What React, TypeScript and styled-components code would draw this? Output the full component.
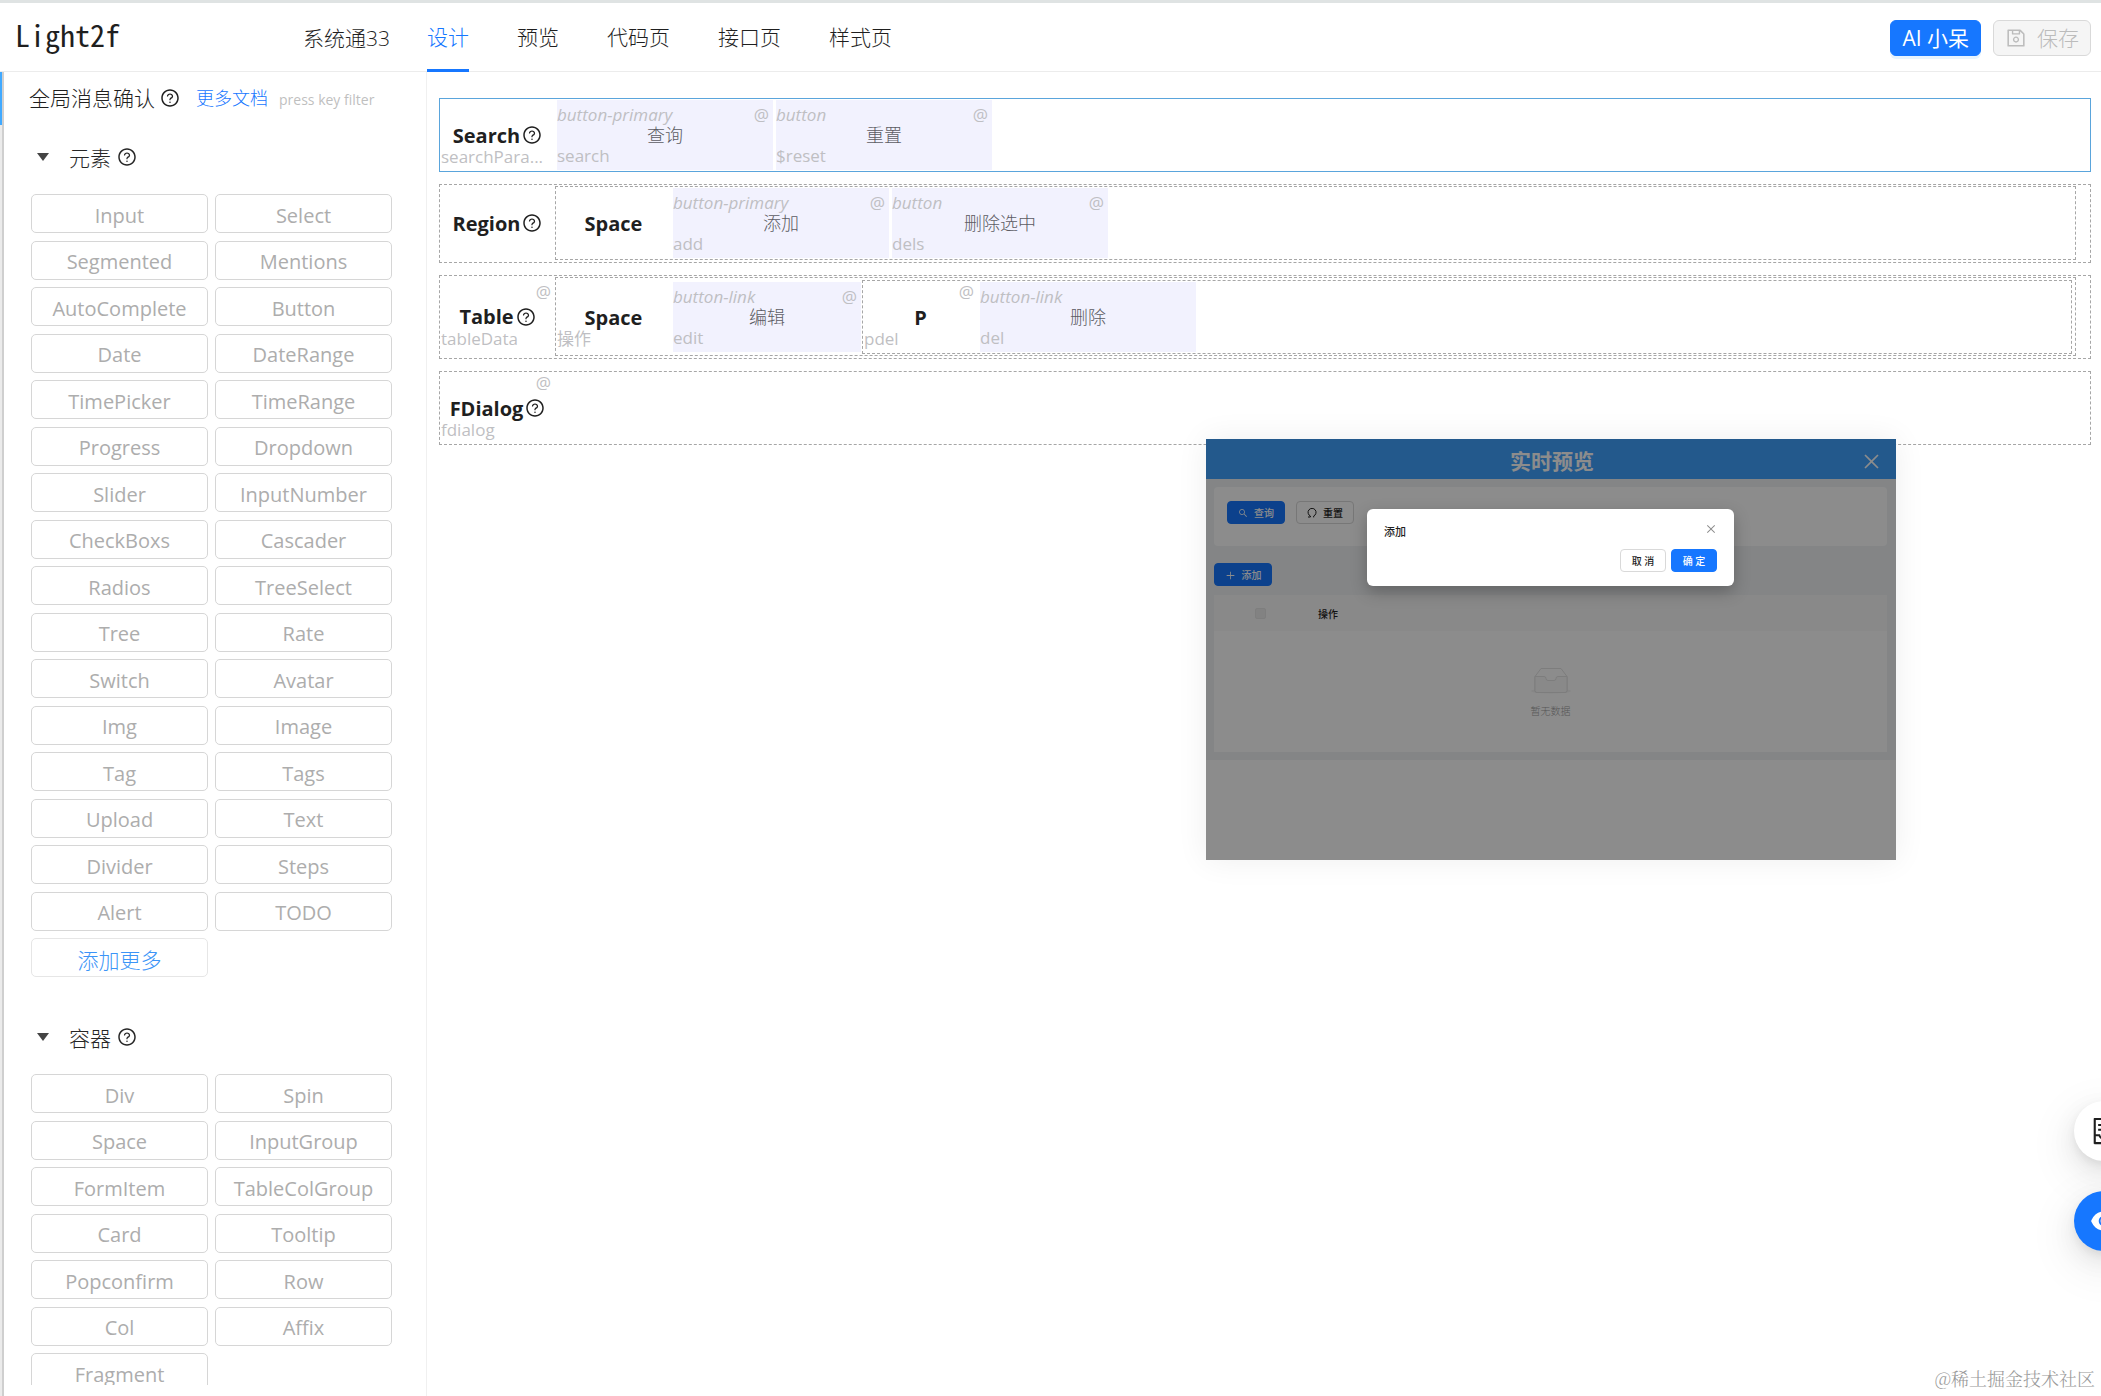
import React from "react";
import styled, { createGlobalStyle, css } from "styled-components";
import {
  AiFillEye,
  AiOutlineClose,
  AiOutlineContainer,
  AiOutlinePlus,
  AiOutlineQuestionCircle,
  AiOutlineSave,
  AiOutlineSearch,
} from "react-icons/ai";

const sans = '"Open Sans", "Noto Sans CJK SC", sans-serif';
const mono = '"Noto Sans Mono CJK SC", "DejaVu Sans Mono", monospace';
const serif = '"Noto Serif CJK SC", "Noto Sans CJK SC", serif';
const blue = "#1677ff";

const GlobalStyle = createGlobalStyle`
  *, *::before, *::after { box-sizing: border-box; }
  body { margin: 0; background: #fff; font-family: ${sans}; color: #1f1f1f; }
  button { font: inherit; margin: 0; padding: 0; cursor: pointer; }
  svg { display: block; flex: none; }
`;

const Shell = styled.div`
  position: relative;
  height: 100vh;
  display: flex;
  flex-direction: column;
  overflow: hidden;
`;

/* ---------- header ---------- */

const Header = styled.header`
  flex: none;
  display: flex;
  height: 72px;
  padding-right: 10px;
  border-top: 3px solid #dfe3e3;
  border-bottom: 1px solid #ececec;
`;

const Brand = styled.div`
  flex: none;
  display: flex;
  justify-content: space-between;
  width: 427px;
  padding: 0 37px 0 15px;
`;

const Logo = styled.span`
  font-family: ${mono};
  font-size: 30px;
  line-height: 62px;
`;

const Project = styled.span`
  font-size: 21px;
  font-weight: 300;
  line-height: 70px;
`;

const Tabs = styled.nav`
  flex: 1;
  display: flex;
  gap: 48px;
`;

const Tab = styled.button<{ $active?: boolean }>`
  height: 69px;
  padding-top: 3px;
  border: 0;
  border-bottom: 3px solid ${(p) => (p.$active ? blue : "transparent")};
  background: none;
  color: ${(p) => (p.$active ? blue : "#1f1f1f")};
  font-size: 21px;
  font-weight: 300;
  line-height: 63px;
`;

const Actions = styled.div`
  display: flex;
  align-items: center;
  gap: 12px;
  padding-top: 2px;
`;

const ActionButton = styled.button<{ $primary?: boolean }>`
  display: flex;
  align-items: center;
  gap: 10px;
  height: 36px;
  padding: 0 11px;
  border: 1px solid ${(p) => (p.$primary ? blue : "#d9d9d9")};
  border-radius: 6px;
  background: ${(p) => (p.$primary ? blue : "#f5f5f5")};
  box-shadow: ${(p) => (p.$primary ? "0 3px 0 rgba(5, 145, 255, 0.1)" : "none")};
  color: ${(p) => (p.$primary ? "#fff" : "#bcbcbc")};
  font-size: 21px;
  font-weight: ${(p) => (p.$primary ? 400 : 300)};
  line-height: 32px;
`;

/* ---------- sidebar ---------- */

const Body = styled.div`
  flex: 1;
  min-height: 0;
  display: flex;
`;

const Rail = styled.div`
  flex: none;
  width: 4px;
  background: #ebebeb;
  border-right: 2px solid #cfcfcf;
`;

const RailThumb = styled.div`
  width: 2px;
  height: 53px;
  background: #40a9ff;
`;

const Sidebar = styled.aside`
  flex: none;
  width: 423px;
  padding-bottom: 11px;
  border-right: 1px solid #f0f0f0;
`;

const SidebarScroll = styled.div`
  height: 100%;
  overflow: hidden;
`;

const DocBar = styled.div`
  display: flex;
  align-items: center;
  height: 52px;
  padding: 0 34px 0 25px;
`;

const DocTitle = styled.span`
  margin-right: 5px;
  font-size: 21px;
  font-weight: 300;
  line-height: 28px;
`;

const DocLink = styled.a`
  margin: 0 11px 0 16px;
  color: ${blue};
  font-size: 18px;
  font-weight: 300;
  line-height: 28px;
  text-decoration: none;
`;

const Hint = styled.span`
  padding-top: 3px;
  color: #bfbfbf;
  font-size: 14px;
  line-height: 20px;
  white-space: nowrap;
`;

const Group = styled.section`
  margin-bottom: 27px;
`;

const GroupTitle = styled.h2`
  display: flex;
  align-items: center;
  gap: 6px;
  height: 66px;
  margin: 0 0 4px;
  padding-left: 33px;
  font-size: 21px;
  font-weight: 300;
  color: #262626;
`;

const Caret = styled.i`
  margin-right: 14px;
  border: 6px solid transparent;
  border-top: 8px solid #444;
  border-bottom: 0;
`;

const Palette = styled.div<{ $height: number }>`
  display: grid;
  grid-template-columns: 1fr 1fr;
  column-gap: 7px;
  align-content: space-between;
  min-height: ${(p) => p.$height}px;
  padding: 0 34px 0 27px;
`;

const PaletteItem = styled.button<{ $more?: boolean }>`
  height: 39px;
  padding-top: 4px;
  border: 1px solid ${(p) => (p.$more ? "#e6e6e6" : "#d6d6d6")};
  border-radius: 5px;
  background: #fff;
  color: ${(p) => (p.$more ? "#3b94f7" : "#adadad")};
  font-size: ${(p) => (p.$more ? 21 : 20)}px;
  font-weight: ${(p) => (p.$more ? 300 : 400)};
  line-height: 32px;
`;

/* ---------- canvas ---------- */

const Canvas = styled.main`
  flex: 1;
  min-width: 0;
  display: flex;
  flex-direction: column;
  gap: 12px;
  padding: 26px 10px 0 12px;
`;

const Frame = styled.div<{ $selected?: boolean; $pad?: string; $grow?: boolean }>`
  display: flex;
  align-items: center;
  padding: ${(p) => p.$pad ?? "0"};
  border: 1px ${(p) => (p.$selected ? "solid #5aa5dc" : "dashed #a6a6a6")};
  ${(p) =>
    p.$grow &&
    css`
      flex: 1;
      min-width: 0;
    `}
`;

const Head = styled.div`
  position: relative;
  flex: none;
  display: flex;
  align-items: center;
  justify-content: center;
  gap: 2px;
  width: 115px;
  height: 72px;
  font-size: 20px;
  font-weight: 700;
`;

const Block = styled.div<{ $width: number }>`
  position: relative;
  flex: none;
  display: flex;
  align-items: center;
  justify-content: center;
  width: ${(p) => p.$width}px;
  height: 70px;
  margin: 0 1px 0 2px;
  padding-bottom: 2px;
  background: #f2f2fe;
  color: #5c5c63;
  font-size: 18px;
  font-weight: 300;
`;

const note = css`
  position: absolute;
  color: #bfbfc3;
  font-size: 17px;
  font-weight: 400;
  line-height: 22px;
  white-space: nowrap;
`;

const TypeNote = styled.em`
  ${note}
  top: 4px;
  left: 0;
`;

const NameNote = styled.span<{ $inset?: boolean }>`
  ${note}
  bottom: 3px;
  left: ${(p) => (p.$inset ? 1 : 0)}px;
`;

const AtNote = styled.span<{ $head?: boolean }>`
  ${note}
  top: ${(p) => (p.$head ? 0 : 4)}px;
  right: 4px;
`;

function HeadCell(props: { name: string; help?: boolean; at?: boolean; note?: string }) {
  return (
    <Head>
      <span>{props.name}</span>
      {props.help && <AiOutlineQuestionCircle size={20} />}
      {props.at && <AtNote $head>@</AtNote>}
      {props.note && <NameNote $inset>{props.note}</NameNote>}
    </Head>
  );
}

function ButtonBlock(props: { type: string; label: string; name: string; width?: number }) {
  return (
    <Block $width={props.width ?? 216}>
      <TypeNote>{props.type}</TypeNote>
      <AtNote>@</AtNote>
      {props.label}
      <NameNote>{props.name}</NameNote>
    </Block>
  );
}

/* ---------- live preview window ---------- */

const Preview = styled.section`
  position: absolute;
  top: 439px;
  right: 205px;
  width: 690px;
  height: 421px;
  background: #fff;
  box-shadow: 0 0 30px rgba(0, 0, 0, 0.07);
  font-size: 10px;
`;

const PreviewBar = styled.div`
  display: grid;
  grid-template-columns: 1fr auto 1fr;
  align-items: center;
  height: 40px;
  padding: 4px 14px 0 16px;
  background: #40a2ff;
  color: #fff;
`;

const PreviewTitle = styled.h3`
  grid-column: 2;
  margin: 0;
  font-size: 21px;
  line-height: 34px;
`;

const BareButton = styled.button`
  display: flex;
  justify-self: end;
  border: 0;
  background: none;
  color: inherit;
`;

const PreviewPage = styled.div`
  padding: 8px 9px 8px 8px;
  background: #f0f3f4;
`;

const SearchCard = styled.div`
  display: flex;
  gap: 11px;
  height: 59px;
  margin-bottom: 17px;
  padding: 14px 13px;
  border-radius: 4px;
  background: #fff;
`;

const SmallButton = styled.button<{ $primary?: boolean; $width: number }>`
  display: flex;
  align-items: center;
  justify-content: center;
  gap: 6px;
  width: ${(p) => p.$width}px;
  height: 23px;
  padding-top: 1px;
  border: 1px solid ${(p) => (p.$primary ? blue : "#d9d9d9")};
  border-radius: 4px;
  background: ${(p) => (p.$primary ? blue : "#fff")};
  color: ${(p) => (p.$primary ? "#fff" : "#1f1f1f")};
  font-size: 10px;
  font-weight: 500;
  line-height: 20px;
`;

const DataTable = styled.table`
  width: 100%;
  margin-top: 9px;
  border-collapse: collapse;
  background: #fff;

  th {
    height: 36px;
    padding: 0 0 0 23px;
    background: #fafafa;
    text-align: left;
    font-weight: 500;
  }
  th:first-child {
    width: 81px;
    padding-left: 41px;
  }
  td {
    height: 121px;
    padding: 2px 0 0;
    color: #a0a0a0;
    text-align: center;
    font-weight: 300;
  }
`;

const Check = styled.input`
  display: block;
  appearance: none;
  width: 11px;
  height: 11px;
  margin: 0;
  border: 1px solid #e6e6e6;
  border-radius: 2px;
  background: #ededed;
`;

const Empty = styled.div`
  display: flex;
  flex-direction: column;
  align-items: center;
  gap: 9px;
  line-height: 16px;
`;

const Mask = styled.div`
  position: absolute;
  inset: 0;
  display: flex;
  align-items: flex-start;
  justify-content: center;
  padding: 70px 1px 0 0;
  background: rgba(0, 0, 0, 0.45);
`;

const Dialog = styled.div`
  display: flex;
  flex-direction: column;
  justify-content: space-between;
  width: 367px;
  height: 77px;
  padding: 14px 17px;
  border-radius: 6px;
  background: #fff;
  box-shadow: 0 6px 16px rgba(0, 0, 0, 0.25);
`;

const DialogHead = styled.div`
  display: flex;
  justify-content: space-between;
  color: #8c8c8c;
`;

const DialogTitle = styled.h4`
  margin: 0;
  color: #1f1f1f;
  font-size: 11px;
  font-weight: 500;
  line-height: 18px;
`;

const DialogFoot = styled.div`
  display: flex;
  justify-content: flex-end;
  gap: 5px;
`;

/* ---------- floating parts ---------- */

const FloatStack = styled.div`
  position: absolute;
  top: 1101px;
  right: -33px;
  display: grid;
  gap: 30px;
`;

const FloatButton = styled.button<{ $primary?: boolean }>`
  display: flex;
  align-items: center;
  justify-content: center;
  width: 60px;
  height: 60px;
  border: 0;
  border-radius: 50%;
  background: ${(p) => (p.$primary ? blue : "#fff")};
  color: ${(p) => (p.$primary ? "#fff" : "#1f1f1f")};
  box-shadow: 0 9px 24px rgba(0, 0, 0, 0.08), 0 4px 9px rgba(0, 0, 0, 0.06),
    0 14px 42px 12px rgba(0, 0, 0, 0.05);
`;

const Watermark = styled.span`
  position: absolute;
  right: 6px;
  bottom: 4px;
  color: #999;
  font-family: ${serif};
  font-size: 18px;
  font-weight: 300;
  line-height: 28px;
`;

const ResetIcon = () => (
  <svg width="10" height="10" viewBox="0 0 10 10" fill="none" stroke="currentColor">
    <path d="M1 9h2.400V8A4 4 0 1 1 6.700 8v1.400" />
  </svg>
);

const EmptyIcon = () => (
  <svg width="40" height="27" viewBox="0 0 40 27" fill="none" stroke="#e3e3e3">
    <ellipse cx="20" cy="24" rx="20" ry="2.500" fill="#f5f5f5" stroke="none" />
    <path d="M4 9.500 10 1.500h20l6 8v14q0 2-2 2H6q-2 0-2-2z" fill="#fff" />
    <path d="M4 9.500h9q2 0 2 2t2 2h6q2 0 2-2t2-2h9v14q0 2-2 2H6q-2 0-2-2z" fill="#fafafa" />
  </svg>
);

const elements = [
  "Input", "Select", "Segmented", "Mentions", "AutoComplete", "Button", "Date", "DateRange",
  "TimePicker", "TimeRange", "Progress", "Dropdown", "Slider", "InputNumber", "CheckBoxs",
  "Cascader", "Radios", "TreeSelect", "Tree", "Rate", "Switch", "Avatar", "Img", "Image",
  "Tag", "Tags", "Upload", "Text", "Divider", "Steps", "Alert", "TODO",
];

const containers = [
  "Div", "Spin", "Space", "InputGroup", "FormItem", "TableColGroup", "Card", "Tooltip",
  "Popconfirm", "Row", "Col", "Affix", "Fragment",
];

const tabs = ["设计", "预览", "代码页", "接口页", "样式页"];

function PaletteGroup(props: { title: string; items: string[]; height: number; more?: string }) {
  return (
    <Group>
      <GroupTitle>
        <Caret />
        {props.title}
        <AiOutlineQuestionCircle size={20} />
      </GroupTitle>
      <Palette $height={props.height}>
        {props.items.map((item) => (
          <PaletteItem key={item}>{item}</PaletteItem>
        ))}
        {props.more && <PaletteItem $more>{props.more}</PaletteItem>}
      </Palette>
    </Group>
  );
}

function LivePreview() {
  return (
    <Preview>
      <PreviewBar>
        <PreviewTitle>实时预览</PreviewTitle>
        <BareButton aria-label="关闭预览">
          <AiOutlineClose size={21} />
        </BareButton>
      </PreviewBar>
      <PreviewPage>
        <SearchCard>
          <SmallButton $primary $width={58}>
            <AiOutlineSearch size={10} />
            查询
          </SmallButton>
          <SmallButton $width={58}>
            <ResetIcon />
            重置
          </SmallButton>
        </SearchCard>
        <SmallButton $primary $width={58}>
          <AiOutlinePlus size={11} />
          添加
        </SmallButton>
        <DataTable>
          <thead>
            <tr>
              <th>
                <Check type="checkbox" disabled aria-label="全选" />
              </th>
              <th>操作</th>
            </tr>
          </thead>
          <tbody>
            <tr>
              <td colSpan={2}>
                <Empty>
                  <EmptyIcon />
                  暂无数据
                </Empty>
              </td>
            </tr>
          </tbody>
        </DataTable>
      </PreviewPage>
      <Mask>
        <Dialog role="dialog" aria-label="添加">
          <DialogHead>
            <DialogTitle>添加</DialogTitle>
            <BareButton aria-label="关闭">
              <AiOutlineClose size={12} />
            </BareButton>
          </DialogHead>
          <DialogFoot>
            <SmallButton $width={46}>取 消</SmallButton>
            <SmallButton $primary $width={46}>确 定</SmallButton>
          </DialogFoot>
        </Dialog>
      </Mask>
    </Preview>
  );
}

export default function App() {
  return (
    <Shell>
      <GlobalStyle />
      <Header>
        <Brand>
          <Logo>Light2f</Logo>
          <Project>系统通33</Project>
        </Brand>
        <Tabs>
          {tabs.map((tab, i) => (
            <Tab key={tab} $active={i === 0}>
              {tab}
            </Tab>
          ))}
        </Tabs>
        <Actions>
          <ActionButton $primary>AI 小呆</ActionButton>
          <ActionButton disabled>
            <AiOutlineSave size={22} />
            保存
          </ActionButton>
        </Actions>
      </Header>

      <Body>
        <Rail>
          <RailThumb />
        </Rail>
        <Sidebar>
          <SidebarScroll>
            <DocBar>
              <DocTitle>全局消息确认</DocTitle>
              <AiOutlineQuestionCircle size={20} />
              <DocLink href="#docs">更多文档</DocLink>
              <Hint>press key filter</Hint>
            </DocBar>
            <PaletteGroup title="元素" items={elements} height={783} more="添加更多" />
            <PaletteGroup title="容器" items={containers} height={318} />
          </SidebarScroll>
        </Sidebar>

        <Canvas>
          <Frame $selected>
            <HeadCell name="Search" help note="searchPara..." />
            <ButtonBlock type="button-primary" label="查询" name="search" />
            <ButtonBlock type="button" label="重置" name="$reset" />
          </Frame>
          <Frame $pad="1px 14px 2px 0">
            <HeadCell name="Region" help />
            <Frame $grow>
              <HeadCell name="Space" />
              <ButtonBlock type="button-primary" label="添加" name="add" />
              <ButtonBlock type="button" label="删除选中" name="dels" />
            </Frame>
          </Frame>
          <Frame $pad="1px 14px 2px 0">
            <HeadCell name="Table" help at note="tableData" />
            <Frame $grow $pad="2px 3px 1px 0">
              <HeadCell name="Space" note="操作" />
              <ButtonBlock type="button-link" label="编辑" name="edit" width={188} />
              <Frame $grow>
                <HeadCell name="P" at note="pdel" />
                <Block $width={216}>
                  <TypeNote>button-link</TypeNote>
                  删除
                  <NameNote>del</NameNote>
                </Block>
              </Frame>
            </Frame>
          </Frame>
          <Frame>
            <HeadCell name="FDialog" help at note="fdialog" />
          </Frame>
        </Canvas>
      </Body>

      <LivePreview />

      <FloatStack>
        <FloatButton aria-label="文档">
          <AiOutlineContainer size={30} />
        </FloatButton>
        <FloatButton $primary aria-label="预览">
          <AiFillEye size={30} />
        </FloatButton>
      </FloatStack>
      <Watermark>@稀土掘金技术社区</Watermark>
    </Shell>
  );
}
